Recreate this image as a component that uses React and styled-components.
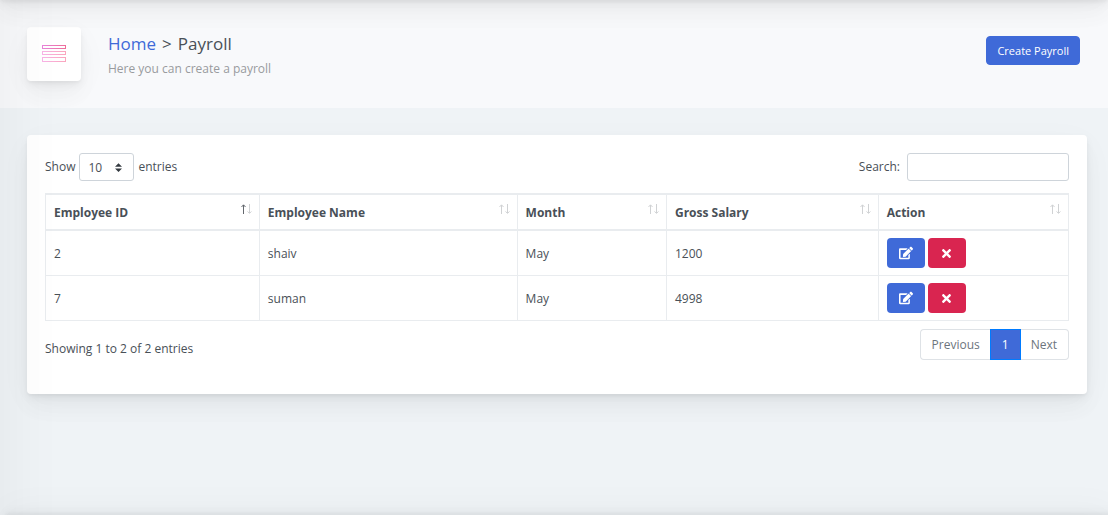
import React, { useState } from "react";
import styled, { createGlobalStyle, css } from "styled-components";
import { FaEdit, FaTimes } from "react-icons/fa";

const GlobalStyle = createGlobalStyle`
  *, *::before, *::after { box-sizing: border-box; }
  body {
    margin: 0;
    background: #f1f4f6;
    color: #495057;
    font-family: "Segoe UI", "Open Sans", "Noto Sans", sans-serif;
    font-size: 12px;
    line-height: 20px;
  }
  button, input, select { font: inherit; color: inherit; }
`;

const elevation = css`
  box-shadow:
    0 8px 35px rgba(4, 9, 20, 0.03),
    0 15px 22px rgba(4, 9, 20, 0.03),
    0 4px 9px rgba(4, 9, 20, 0.05),
    0 2px 3px rgba(4, 9, 20, 0.03);
`;

const Page = styled.div`
  position: relative;
  min-height: 100vh;
  overflow: hidden;
  background: #eff3f6;
`;

const EdgeShadow = styled.div`
  position: absolute;
  pointer-events: none;
  z-index: 2;
  ${({ $edge }) =>
    $edge === "top" &&
    css`
      left: 0; right: 0; top: -60px; height: 60px;
      ${elevation}
    `}
  ${({ $edge }) =>
    $edge === "left" &&
    css`
      top: -60px; bottom: -60px; left: -280px; width: 280px;
      box-shadow: 7px 0 60px rgba(0, 0, 0, 0.05);
    `}
  ${({ $edge }) =>
    $edge === "bottom" &&
    css`
      left: 0; right: 0; bottom: -60px; height: 60px;
      box-shadow:
        5px -8px 35px rgba(4, 9, 20, 0.03),
        5px -4px 9px rgba(4, 9, 20, 0.04),
        5px -2px 3px rgba(4, 9, 20, 0.03);
    `}
`;

const PageTitle = styled.header`
  display: flex;
  align-items: flex-start;
  padding: 27px 28px 27px 27px;
  background: #f8f9fb;
`;

const TitleIcon = styled.div`
  display: flex;
  align-items: center;
  justify-content: center;
  width: 54px;
  height: 54px;
  margin-right: 27px;
  border-radius: 4px;
  background: #fff;
  ${elevation}
`;

const TitleText = styled.div`
  flex: 1;
  padding-top: 4px;
`;

const Breadcrumb = styled.h1`
  display: flex;
  gap: 6px;
  margin: 0;
  font-size: 17px;
  font-weight: 400;
  line-height: 26px;
`;

const HomeLink = styled.a`
  color: #3f6ad8;
  text-decoration: none;
`;

const Subtitle = styled.p`
  margin: 2px 0 0;
  color: #999b9e;
`;

const PrimaryButton = styled.button`
  height: 29px;
  margin-top: 9px;
  padding: 0 10px;
  border: 1px solid #3f6ad8;
  border-radius: 4px;
  background: #3f6ad8;
  color: #fff;
  font-size: 11px;
  line-height: 20px;
`;

const Card = styled.main`
  margin: 27px 21px 27px 27px;
  padding: 18px 18px 34px;
  border-radius: 4px;
  background: #fff;
  ${elevation}
`;

const Toolbar = styled.div`
  display: flex;
  justify-content: space-between;
  margin-bottom: 12px;
`;

const LengthLabel = styled.label`
  display: flex;
  align-items: center;
  gap: 4px;
`;

const SelectBox = styled.span`
  position: relative;
  display: inline-flex;

  svg {
    position: absolute;
    right: 12px;
    top: 10px;
    pointer-events: none;
  }
`;

const Select = styled.select`
  appearance: none;
  width: 55px;
  height: 28px;
  padding: 1px 20px 0 8px;
  border: 1px solid #ced4da;
  border-radius: 3px;
  background: #fff;
`;

const SearchLabel = styled.label`
  display: flex;
  align-items: center;
  gap: 7px;
`;

const SearchInput = styled.input`
  width: 162px;
  height: 28px;
  padding: 4px 8px;
  border: 1px solid #ced4da;
  border-radius: 3px;
  background: #fff;
`;

const Table = styled.table`
  width: 100%;
  table-layout: fixed;
  border-collapse: separate;
  border-spacing: 0;
  border: solid #e9ecef;
  border-width: 2px 0 0 1px;
`;

const Col = styled.col`
  width: ${({ $width }) => $width};
`;

const HeadCell = styled.th`
  height: 36px;
  padding: 2px 8px 0;
  border: solid #e9ecef;
  border-width: 0 1px 2px 0;
  text-align: left;
  font-weight: 700;
`;

const HeadContent = styled.div`
  display: flex;
  align-items: center;
  justify-content: space-between;
`;

const SortIcon = styled.svg`
  flex: none;
  margin: 0 -2px 8px 0;
`;

const Cell = styled.td`
  height: 45px;
  padding: ${({ $controls }) => ($controls ? "0 8px" : "2px 8px 0")};
  border: solid #e9ecef;
  border-width: 0 1px 1px 0;
`;

const Actions = styled.div`
  display: flex;
  gap: 3px;
`;

const IconButton = styled.button`
  display: flex;
  align-items: center;
  justify-content: center;
  width: 38px;
  height: 30px;
  padding: 0;
  border: 0;
  border-radius: 4px;
  background: ${({ $danger }) => ($danger ? "#d92550" : "#3f6ad8")};
  color: #fff;
`;

const TableFooter = styled.div`
  display: flex;
  justify-content: space-between;
  align-items: flex-start;
  padding-top: 8px;
`;

const Info = styled.div`
  padding-top: 10px;
`;

const Pagination = styled.nav`
  display: flex;
`;

const PageButton = styled.button`
  height: 31px;
  padding: 1px 11px 0;
  border: 1px solid #dee2e6;
  background: #fff;
  color: #6c757d;

  &:first-child {
    border-right: 0;
    border-radius: 4px 0 0 4px;
  }
  &:last-child {
    border-left: 0;
    border-radius: 0 4px 4px 0;
  }
  &[aria-current="page"] {
    z-index: 1;
    margin: 0 -1px;
    border-color: #007bff;
    background: #3f6ad8;
    color: #fff;
  }
`;

const columns = [
  { label: "Employee ID", width: "20.9%", sorted: true },
  { label: "Employee Name", width: "25.2%" },
  { label: "Month", width: "14.6%" },
  { label: "Gross Salary", width: "20.7%" },
  { label: "Action", width: "18.6%" },
];

const rows = [
  { id: "2", name: "shaiv", month: "May", salary: "1200" },
  { id: "7", name: "suman", month: "May", salary: "4998" },
];

function SortArrows({ sorted }) {
  return (
    <SortIcon width="12" height="10" viewBox="0 0 12 10" fill="none" aria-hidden="true">
      <path d="M2.5 10V1M.5 3L2.5 .8L4.5 3" stroke={sorted ? "#63686e" : "#d0d2d4"} />
      <path d="M8.5 0V9M6.5 7.5L8.5 9.3L10.5 7.5" stroke="#d0d2d4" />
    </SortIcon>
  );
}

function MenuIcon() {
  return (
    <svg width="24" height="18" viewBox="0 0 24 18" fill="none" aria-hidden="true">
      <defs>
        <linearGradient id="menuPink" x1="0" x2="24" y1="0" y2="0" gradientUnits="userSpaceOnUse">
          <stop offset="0" stopColor="#e884dc" />
          <stop offset="1" stopColor="#ee6d98" />
        </linearGradient>
        <linearGradient id="menuRose" x1="0" x2="24" y1="0" y2="0" gradientUnits="userSpaceOnUse">
          <stop offset="0" stopColor="#f8b4e8" />
          <stop offset="1" stopColor="#faa5bc" />
        </linearGradient>
      </defs>
      <rect x=".5" y=".5" width="23" height="3" stroke="url(#menuPink)" />
      <rect x=".5" y="6.5" width="23" height="3" stroke="url(#menuRose)" />
      <rect x=".5" y="12.5" width="23" height="4" stroke="url(#menuRose)" />
    </svg>
  );
}

export default function App() {
  const [length, setLength] = useState("10");
  const [query, setQuery] = useState("");

  return (
    <Page>
      <GlobalStyle />
      <PageTitle>
        <TitleIcon><MenuIcon /></TitleIcon>
        <TitleText>
          <Breadcrumb>
            <HomeLink href="#home">Home</HomeLink>
            <span>&gt;</span>
            <span>Payroll</span>
          </Breadcrumb>
          <Subtitle>Here you can create a payroll</Subtitle>
        </TitleText>
        <PrimaryButton type="button">Create Payroll</PrimaryButton>
      </PageTitle>

      <Card>
        <Toolbar>
          <LengthLabel>
            Show
            <SelectBox>
              <Select value={length} onChange={(e) => setLength(e.target.value)}>
                <option>10</option>
                <option>25</option>
                <option>50</option>
                <option>100</option>
              </Select>
              <svg width="7" height="9" viewBox="0 0 4 5" aria-hidden="true">
                <path fill="#343a40" d="M2 0L0 2h4zm0 5L0 3h4z" />
              </svg>
            </SelectBox>
            entries
          </LengthLabel>
          <SearchLabel>
            Search:
            <SearchInput type="search" value={query} onChange={(e) => setQuery(e.target.value)} />
          </SearchLabel>
        </Toolbar>

        <Table>
          <colgroup>
            {columns.map((c) => <Col key={c.label} $width={c.width} />)}
          </colgroup>
          <thead>
            <tr>
              {columns.map((c) => (
                <HeadCell key={c.label} scope="col">
                  <HeadContent>{c.label}<SortArrows sorted={c.sorted} /></HeadContent>
                </HeadCell>
              ))}
            </tr>
          </thead>
          <tbody>
            {rows.map((r) => (
              <tr key={r.id}>
                <Cell>{r.id}</Cell>
                <Cell>{r.name}</Cell>
                <Cell>{r.month}</Cell>
                <Cell>{r.salary}</Cell>
                <Cell $controls>
                  <Actions>
                    <IconButton type="button" aria-label="Edit"><FaEdit size={14} /></IconButton>
                    <IconButton type="button" aria-label="Delete" $danger><FaTimes size={13} /></IconButton>
                  </Actions>
                </Cell>
              </tr>
            ))}
          </tbody>
        </Table>

        <TableFooter>
          <Info>Showing 1 to 2 of 2 entries</Info>
          <Pagination aria-label="Table pages">
            <PageButton type="button">Previous</PageButton>
            <PageButton type="button" aria-current="page">1</PageButton>
            <PageButton type="button">Next</PageButton>
          </Pagination>
        </TableFooter>
      </Card>

      <EdgeShadow $edge="top" />
      <EdgeShadow $edge="left" />
      <EdgeShadow $edge="bottom" />
    </Page>
  );
}
